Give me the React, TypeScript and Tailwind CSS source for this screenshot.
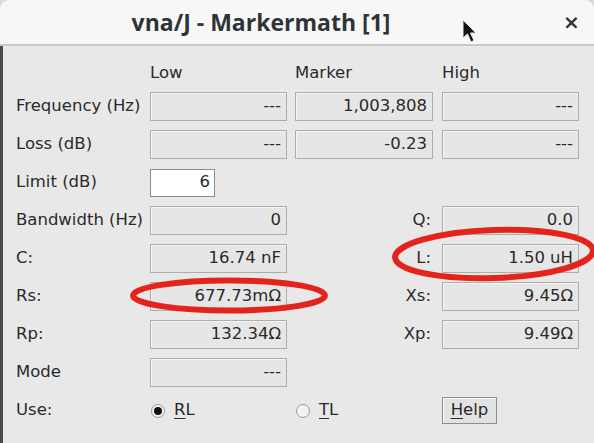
import React from "react";

const font = { fontFamily: '"DejaVu Sans", "Liberation Sans", sans-serif' };

const Field = ({ value, className = "" }: { value: string; className?: string }) => (
  <div
    className={`flex h-[29px] items-center justify-end border border-[#adadad] bg-[#e6e6e6] pr-[5px] text-[16.5px] text-[#2a2a2a] shadow-[inset_1px_1px_0_#f4f4f4] ${className}`}
  >
    {value}
  </div>
);

const Label = ({ text, right }: { text: string; right?: boolean }) => (
  <div className={`flex h-[29px] items-center text-[16.5px] text-[#2a2a2a] ${right ? "justify-end pr-[2px]" : ""}`}>{text}</div>
);

const Radio = ({ checked, label, mnemonic }: { checked?: boolean; label: string; mnemonic: string }) => (
  <div className="flex items-center gap-[9px]">
    <span className="flex h-[14px] w-[14px] items-center justify-center rounded-full border border-[#9a9a9a] bg-[#f2f2f2]">
      {checked && <span className="h-[8px] w-[8px] rounded-full bg-[#111]" />}
    </span>
    <span className="text-[16.5px] text-[#2a2a2a]">
      <span className="underline underline-offset-[3px]">{mnemonic}</span>
      {label}
    </span>
  </div>
);

export default function App() {
  return (
    <div className="relative h-[443px] w-[594px] overflow-hidden bg-[#d9d9d9] font-['DejaVu_Sans',sans-serif]" style={font}>
      <div className="flex h-full flex-col overflow-hidden rounded-t-[9px] bg-[#e8e8e8]">
        {/* title bar */}
        <div className="relative flex h-[46px] shrink-0 items-center border-b-2 border-[#c9c9c9] bg-[#f7f7f7]">
          <div
            className="w-[522px] text-center text-[23px] font-bold text-[#2e3436]"
            style={{ fontFamily: '"Open Sans", "Noto Sans", sans-serif' }}
          >
            vna/J - Markermath [1]
          </div>
          <div className="ml-[41px] text-[20px] font-bold text-[#2e3436]">×</div>
          <svg className="absolute left-[462px] top-[19px]" width="16" height="26" viewBox="0 0 16 26">
            <path d="M1 1 L1 19 L5.5 15 L9 23 L12 21.5 L8.5 14 L14 14 Z" fill="#111" stroke="#eee" strokeWidth="1" />
          </svg>
        </div>

        {/* body */}
        <div className="flex-1 border-l-[3px] border-[#4a4a4a] pl-[13px] pt-[14px]">
          <div className="grid grid-cols-[134px_137px_8px_138px_9px_137px] gap-y-[9px]">
            <div />
            <div className="flex h-[26px] items-center text-[16.5px] text-[#2a2a2a]">Low</div>
            <div />
            <div className="flex h-[26px] items-center text-[16.5px] text-[#2a2a2a]">Marker</div>
            <div />
            <div className="flex h-[26px] items-center text-[16.5px] text-[#2a2a2a]">High</div>

            <div className="col-span-6 -mt-[3px] grid grid-cols-[134px_137px_8px_138px_9px_137px] gap-y-[9px]">
              <Label text="Frequency (Hz)" />
              <Field value="---" />
              <div />
              <Field value="1,003,808" />
              <div />
              <Field value="---" />

              <Label text="Loss (dB)" />
              <Field value="---" />
              <div />
              <Field value="-0.23" />
              <div />
              <Field value="---" />

              <Label text="Limit (dB)" />
              <div className="flex h-[29px] items-center">
                <div className="flex h-[28px] w-[65px] items-center justify-end border border-[#8c8c8c] bg-white pr-[4px] text-[16.5px] text-[#2a2a2a]">
                  6
                </div>
              </div>
              <div />
              <div />
              <div />
              <div />

              <Label text="Bandwidth (Hz)" />
              <Field value="0" />
              <div />
              <Label text="Q:" right />
              <div />
              <Field value="0.0" />

              <Label text="C:" />
              <Field value="16.74 nF" />
              <div />
              <Label text="L:" right />
              <div />
              <Field value="1.50 uH" />

              <Label text="Rs:" />
              <Field value="677.73mΩ" />
              <div />
              <Label text="Xs:" right />
              <div />
              <Field value="9.45Ω" />

              <Label text="Rp:" />
              <Field value="132.34Ω" />
              <div />
              <Label text="Xp:" right />
              <div />
              <Field value="9.49Ω" />

              <Label text="Mode" />
              <Field value="---" />
              <div />
              <div />
              <div />
              <div />

              <Label text="Use:" />
              <div className="flex h-[29px] items-center pl-[1px]">
                <Radio checked mnemonic="R" label="L" />
              </div>
              <div />
              <div className="flex h-[29px] items-center pl-[1px]">
                <Radio mnemonic="T" label="L" />
              </div>
              <div />
              <div className="flex h-[29px] items-center">
                <button className="flex h-[27px] w-[55px] items-center justify-center border border-[#8e8e8e] bg-[#e2e2e2] text-[16.5px] text-[#2a2a2a] shadow-[inset_1px_1px_0_#fafafa]">
                  <span className="underline underline-offset-[3px]">H</span>elp
                </button>
              </div>
            </div>
          </div>
        </div>
      </div>

      {/* red annotation ellipses */}
      <svg className="pointer-events-none absolute left-0 top-0" width="594" height="443" viewBox="0 0 594 443">
        <ellipse cx="229" cy="295.5" rx="96" ry="15" fill="none" stroke="#e4241c" strokeWidth="6" />
        <ellipse cx="494" cy="254" rx="99" ry="24" fill="none" stroke="#e4241c" strokeWidth="6" transform="rotate(-2 494 254)" />
      </svg>
    </div>
  );
}
